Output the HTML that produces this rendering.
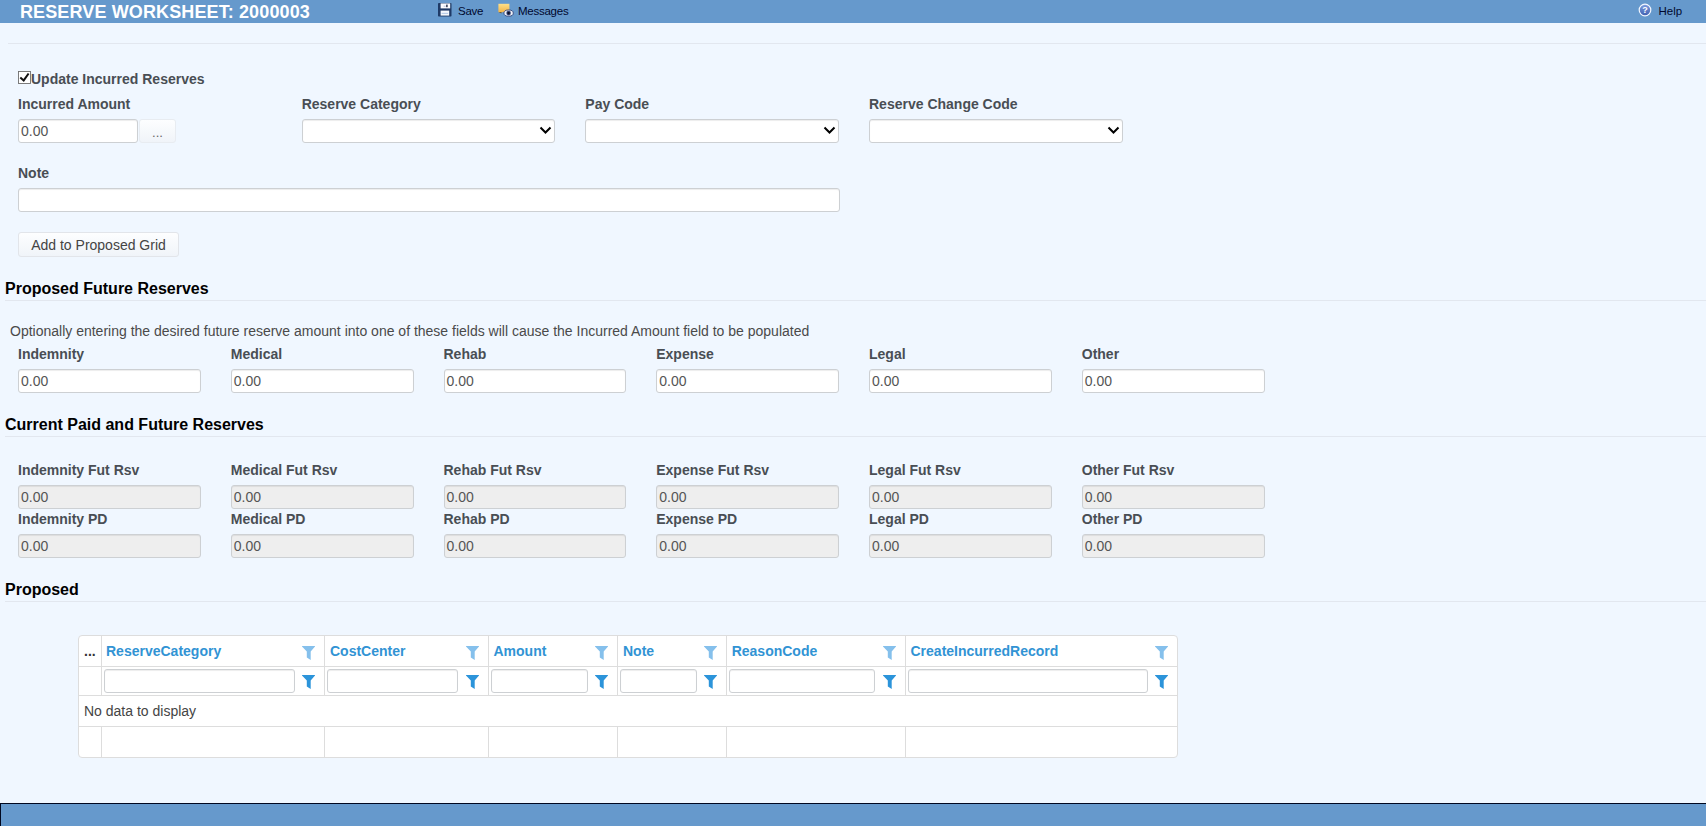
<!DOCTYPE html>
<html>
<head>
<meta charset="utf-8">
<title>Reserve Worksheet</title>
<style>
*{box-sizing:border-box;margin:0;padding:0}
html,body{width:1706px;height:826px;overflow:hidden}
body{position:relative;background:#f0f7ff;font-family:"Liberation Sans",sans-serif;font-size:14px;color:#4a4a4a}
.abs{position:absolute;white-space:nowrap}
#hdr{left:0;top:0;width:1706px;height:23px;background:#6699cc}
#title{left:20px;top:2px;font-size:18px;letter-spacing:0.12px;font-weight:bold;color:#fff;line-height:20px}
.tb{font-size:11.5px;letter-spacing:-0.25px;color:#00082e;line-height:14px;top:4px}
.hr{height:1px;background:#e2e7ef;left:5px;width:1701px}
.lbl{font-weight:bold;font-size:14px;line-height:16px;color:#494e54}
.inp{height:24px;border:1px solid #cdd0d3;border-radius:3px;background:#fff;font-size:14px;line-height:22px;padding-left:2px;color:#555;box-shadow:inset 0 1px 1px rgba(0,0,0,.075)}
.inp.dis{background:#eeeeee}
.btn{height:25px;border:1px solid #e2e5ea;border-radius:3px;background:linear-gradient(#fdfeff,#f0f4f9);font-size:14px;color:#444;text-align:center;line-height:24px}
.h3{font-size:16px;font-weight:bold;color:#000;line-height:18px;left:5px}
.sel svg{position:absolute;right:2px;top:6px}
#ftr{left:0;top:803px;width:1706px;height:23px;background:#6699cc;border-top:1px solid #000820;border-left:1px solid #000820}
#grid{left:78px;top:635px;width:1100px;height:123px;background:#fff;border:1px solid #ddd;border-radius:4px}
.vl{width:1px;background:#ddd}
.hl{height:1px;background:#ddd}
.th{font-weight:bold;font-size:14px;color:#3193d4;line-height:16px;top:643px}
.fin{height:24px;border:1px solid #cdd0d3;border-radius:3px;background:#fff;top:669px;box-shadow:inset 0 1px 1px rgba(0,0,0,.075)}
</style>
</head>
<body>
<div id="hdr" class="abs"></div>
<div id="title" class="abs">RESERVE WORKSHEET: 2000003</div>
<svg class="abs" style="left:438px;top:3.4px" width="13.5" height="13.5" viewBox="0 0 13.5 13.5">
<rect x="0" y="0" width="13.5" height="13.5" rx="0.8" fill="#1f3a66"/>
<rect x="2.6" y="0.4" width="9.6" height="5" fill="#fbfcff"/>
<rect x="8.2" y="1.6" width="1.4" height="2.6" fill="#1b233d"/>
<rect x="5.6" y="2.6" width="2" height="1.4" fill="#c9d3e6"/>
<rect x="2.6" y="7.6" width="8.6" height="5" fill="#f4f8fd"/>
<rect x="3.6" y="9.8" width="6.6" height="1.2" fill="#b9cde8"/>
</svg>
<svg class="abs" style="left:497.5px;top:3px" width="16" height="14" viewBox="0 0 16 14">
<defs><linearGradient id="ng" x1="0" y1="0" x2="0" y2="1"><stop offset="0" stop-color="#ffe08a"/><stop offset="1" stop-color="#f3b446"/></linearGradient></defs>
<rect x="0.4" y="0.8" width="11" height="8.4" fill="url(#ng)"/>
<path d="M0.6 9 H3.5 V10.4 Z" fill="#7a5a2a"/>
<ellipse cx="10.6" cy="10.1" rx="4.7" ry="3.1" fill="#eef1f8" stroke="#33457a" stroke-width="0.9"/>
<circle cx="10.6" cy="10.1" r="2.3" fill="#3b4a7c"/>
<circle cx="10.6" cy="10.1" r="1.3" fill="#0b0f24"/>
</svg>
<svg class="abs" style="left:1638px;top:3px" width="14" height="14" viewBox="0 0 14 14">
<defs><linearGradient id="hg" x1="0" y1="0" x2="0" y2="1"><stop offset="0" stop-color="#7f9fe0"/><stop offset="1" stop-color="#3f5fb0"/></linearGradient></defs>
<circle cx="7" cy="7" r="5.8" fill="url(#hg)" stroke="#f2f6ff" stroke-width="1.2"/>
<text x="7" y="10.2" text-anchor="middle" font-family="Liberation Sans" font-weight="bold" font-size="9" fill="#fff">?</text>
</svg>
<div class="abs tb" style="left:458px">Save</div>
<div class="abs tb" style="left:518px">Messages</div>
<div class="abs tb" style="left:1658.5px;letter-spacing:0">Help</div>

<div class="abs hr" style="top:43px;left:8px;width:1698px"></div>

<svg class="abs" style="left:18px;top:71px" width="13" height="13" viewBox="0 0 13 13"><rect x="0.5" y="0.5" width="12" height="12" fill="#fff" stroke="#6e6e6e" stroke-width="0.9"/><path d="M2.3 6.4 L5.7 9.4 L10.6 2.5" fill="none" stroke="#111" stroke-width="2"/></svg>
<div class="abs lbl" style="left:31px;top:71px">Update Incurred Reserves</div>
<div class="abs lbl" style="left:18px;top:96px">Incurred Amount</div>
<div class="abs lbl" style="left:301.67px;top:96px">Reserve Category</div>
<div class="abs lbl" style="left:585.33px;top:96px">Pay Code</div>
<div class="abs lbl" style="left:869px;top:96px">Reserve Change Code</div>
<div class="abs inp" style="left:18px;top:119px;width:120px">0.00</div>
<div class="abs btn" style="left:139px;top:119px;width:37px;height:24px;line-height:25px;color:#666;font-size:13px;border-color:#e8ecf1">...</div>
<div class="abs inp sel" style="left:301.67px;top:119px;width:253.67px"><svg width="13" height="9" viewBox="0 0 13 9"><path d="M1.5 1.5 L6.5 6.5 L11.5 1.5" fill="none" stroke="#000" stroke-width="2"/></svg></div>
<div class="abs inp sel" style="left:585.33px;top:119px;width:253.67px"><svg width="13" height="9" viewBox="0 0 13 9"><path d="M1.5 1.5 L6.5 6.5 L11.5 1.5" fill="none" stroke="#000" stroke-width="2"/></svg></div>
<div class="abs inp sel" style="left:869px;top:119px;width:253.67px"><svg width="13" height="9" viewBox="0 0 13 9"><path d="M1.5 1.5 L6.5 6.5 L11.5 1.5" fill="none" stroke="#000" stroke-width="2"/></svg></div>

<div class="abs lbl" style="left:18px;top:165px">Note</div>
<div class="abs inp" style="left:18px;top:188px;width:822px"></div>
<div class="abs btn" style="left:18px;top:232px;width:161px">Add to Proposed Grid</div>

<div class="abs h3" style="top:280px">Proposed Future Reserves</div>
<div class="abs hr" style="top:300px"></div>
<div class="abs" style="left:10px;top:323px;font-size:14px;line-height:16px;color:#4a4a4a">Optionally entering the desired future reserve amount into one of these fields will cause the Incurred Amount field to be populated</div>

<div class="abs lbl" style="left:18px;top:346px">Indemnity</div>
<div class="abs inp" style="left:18px;top:369px;width:182.75px">0.00</div>
<div class="abs lbl" style="left:230.75px;top:346px">Medical</div>
<div class="abs inp" style="left:230.75px;top:369px;width:182.75px">0.00</div>
<div class="abs lbl" style="left:443.5px;top:346px">Rehab</div>
<div class="abs inp" style="left:443.5px;top:369px;width:182.75px">0.00</div>
<div class="abs lbl" style="left:656.25px;top:346px">Expense</div>
<div class="abs inp" style="left:656.25px;top:369px;width:182.75px">0.00</div>
<div class="abs lbl" style="left:869px;top:346px">Legal</div>
<div class="abs inp" style="left:869px;top:369px;width:182.75px">0.00</div>
<div class="abs lbl" style="left:1081.75px;top:346px">Other</div>
<div class="abs inp" style="left:1081.75px;top:369px;width:182.75px">0.00</div>

<div class="abs h3" style="top:416px">Current Paid and Future Reserves</div>
<div class="abs hr" style="top:436px"></div>

<div class="abs lbl" style="left:18px;top:462px">Indemnity Fut Rsv</div>
<div class="abs inp dis" style="left:18px;top:485px;width:182.75px">0.00</div>
<div class="abs lbl" style="left:18px;top:511px">Indemnity PD</div>
<div class="abs inp dis" style="left:18px;top:534px;width:182.75px">0.00</div>
<div class="abs lbl" style="left:230.75px;top:462px">Medical Fut Rsv</div>
<div class="abs inp dis" style="left:230.75px;top:485px;width:182.75px">0.00</div>
<div class="abs lbl" style="left:230.75px;top:511px">Medical PD</div>
<div class="abs inp dis" style="left:230.75px;top:534px;width:182.75px">0.00</div>
<div class="abs lbl" style="left:443.5px;top:462px">Rehab Fut Rsv</div>
<div class="abs inp dis" style="left:443.5px;top:485px;width:182.75px">0.00</div>
<div class="abs lbl" style="left:443.5px;top:511px">Rehab PD</div>
<div class="abs inp dis" style="left:443.5px;top:534px;width:182.75px">0.00</div>
<div class="abs lbl" style="left:656.25px;top:462px">Expense Fut Rsv</div>
<div class="abs inp dis" style="left:656.25px;top:485px;width:182.75px">0.00</div>
<div class="abs lbl" style="left:656.25px;top:511px">Expense PD</div>
<div class="abs inp dis" style="left:656.25px;top:534px;width:182.75px">0.00</div>
<div class="abs lbl" style="left:869px;top:462px">Legal Fut Rsv</div>
<div class="abs inp dis" style="left:869px;top:485px;width:182.75px">0.00</div>
<div class="abs lbl" style="left:869px;top:511px">Legal PD</div>
<div class="abs inp dis" style="left:869px;top:534px;width:182.75px">0.00</div>
<div class="abs lbl" style="left:1081.75px;top:462px">Other Fut Rsv</div>
<div class="abs inp dis" style="left:1081.75px;top:485px;width:182.75px">0.00</div>
<div class="abs lbl" style="left:1081.75px;top:511px">Other PD</div>
<div class="abs inp dis" style="left:1081.75px;top:534px;width:182.75px">0.00</div>

<div class="abs h3" style="top:581px">Proposed</div>
<div class="abs hr" style="top:601px"></div>

<div id="grid" class="abs"></div>
<div class="abs vl" style="left:101px;top:636px;height:59px"></div>
<div class="abs vl" style="left:101px;top:727px;height:30px"></div>
<div class="abs vl" style="left:324px;top:636px;height:59px"></div>
<div class="abs vl" style="left:324px;top:727px;height:30px"></div>
<div class="abs vl" style="left:488px;top:636px;height:59px"></div>
<div class="abs vl" style="left:488px;top:727px;height:30px"></div>
<div class="abs vl" style="left:617px;top:636px;height:59px"></div>
<div class="abs vl" style="left:617px;top:727px;height:30px"></div>
<div class="abs vl" style="left:726px;top:636px;height:59px"></div>
<div class="abs vl" style="left:726px;top:727px;height:30px"></div>
<div class="abs vl" style="left:905px;top:636px;height:59px"></div>
<div class="abs vl" style="left:905px;top:727px;height:30px"></div>
<div class="abs hl" style="left:79px;top:666px;width:1098px"></div>
<div class="abs hl" style="left:79px;top:695px;width:1098px"></div>
<div class="abs hl" style="left:79px;top:726px;width:1098px"></div>
<div class="abs" style="left:84px;top:643px;font-weight:bold;font-size:14px;line-height:16px;color:#333">...</div>
<div class="abs th" style="left:106px">ReserveCategory</div>
<svg class="abs" style="left:302px;top:646px" width="13" height="14" viewBox="0 0 13 14"><path d="M0 0 H13 V0.6 L8.7 5.6 V14 L4.8 11.5 V5.6 L0 0.6 Z" fill="#85c0ec"/></svg>
<div class="abs fin" style="left:104px;width:191px"></div>
<svg class="abs" style="left:301.5px;top:675px" width="13" height="14" viewBox="0 0 13 14"><path d="M0 0 H13 V0.6 L8.7 5.6 V14 L4.8 11.5 V5.6 L0 0.6 Z" fill="#2c94da"/></svg>
<div class="abs th" style="left:330px">CostCenter</div>
<svg class="abs" style="left:466px;top:646px" width="13" height="14" viewBox="0 0 13 14"><path d="M0 0 H13 V0.6 L8.7 5.6 V14 L4.8 11.5 V5.6 L0 0.6 Z" fill="#85c0ec"/></svg>
<div class="abs fin" style="left:327px;width:131px"></div>
<svg class="abs" style="left:465.5px;top:675px" width="13" height="14" viewBox="0 0 13 14"><path d="M0 0 H13 V0.6 L8.7 5.6 V14 L4.8 11.5 V5.6 L0 0.6 Z" fill="#2c94da"/></svg>
<div class="abs th" style="left:493.5px">Amount</div>
<svg class="abs" style="left:595px;top:646px" width="13" height="14" viewBox="0 0 13 14"><path d="M0 0 H13 V0.6 L8.7 5.6 V14 L4.8 11.5 V5.6 L0 0.6 Z" fill="#85c0ec"/></svg>
<div class="abs fin" style="left:491px;width:97px"></div>
<svg class="abs" style="left:594.5px;top:675px" width="13" height="14" viewBox="0 0 13 14"><path d="M0 0 H13 V0.6 L8.7 5.6 V14 L4.8 11.5 V5.6 L0 0.6 Z" fill="#2c94da"/></svg>
<div class="abs th" style="left:623px">Note</div>
<svg class="abs" style="left:704px;top:646px" width="13" height="14" viewBox="0 0 13 14"><path d="M0 0 H13 V0.6 L8.7 5.6 V14 L4.8 11.5 V5.6 L0 0.6 Z" fill="#85c0ec"/></svg>
<div class="abs fin" style="left:620px;width:77px"></div>
<svg class="abs" style="left:703.5px;top:675px" width="13" height="14" viewBox="0 0 13 14"><path d="M0 0 H13 V0.6 L8.7 5.6 V14 L4.8 11.5 V5.6 L0 0.6 Z" fill="#2c94da"/></svg>
<div class="abs th" style="left:731.7px">ReasonCode</div>
<svg class="abs" style="left:883px;top:646px" width="13" height="14" viewBox="0 0 13 14"><path d="M0 0 H13 V0.6 L8.7 5.6 V14 L4.8 11.5 V5.6 L0 0.6 Z" fill="#85c0ec"/></svg>
<div class="abs fin" style="left:729px;width:146px"></div>
<svg class="abs" style="left:882.5px;top:675px" width="13" height="14" viewBox="0 0 13 14"><path d="M0 0 H13 V0.6 L8.7 5.6 V14 L4.8 11.5 V5.6 L0 0.6 Z" fill="#2c94da"/></svg>
<div class="abs th" style="left:910.5px">CreateIncurredRecord</div>
<svg class="abs" style="left:1155px;top:646px" width="13" height="14" viewBox="0 0 13 14"><path d="M0 0 H13 V0.6 L8.7 5.6 V14 L4.8 11.5 V5.6 L0 0.6 Z" fill="#85c0ec"/></svg>
<div class="abs fin" style="left:908px;width:240px"></div>
<svg class="abs" style="left:1154.5px;top:675px" width="13" height="14" viewBox="0 0 13 14"><path d="M0 0 H13 V0.6 L8.7 5.6 V14 L4.8 11.5 V5.6 L0 0.6 Z" fill="#2c94da"/></svg>
<div class="abs" style="left:84px;top:703px;font-size:14px;line-height:16px;color:#444">No data to display</div>

<div id="ftr" class="abs"></div>
</body>
</html>
